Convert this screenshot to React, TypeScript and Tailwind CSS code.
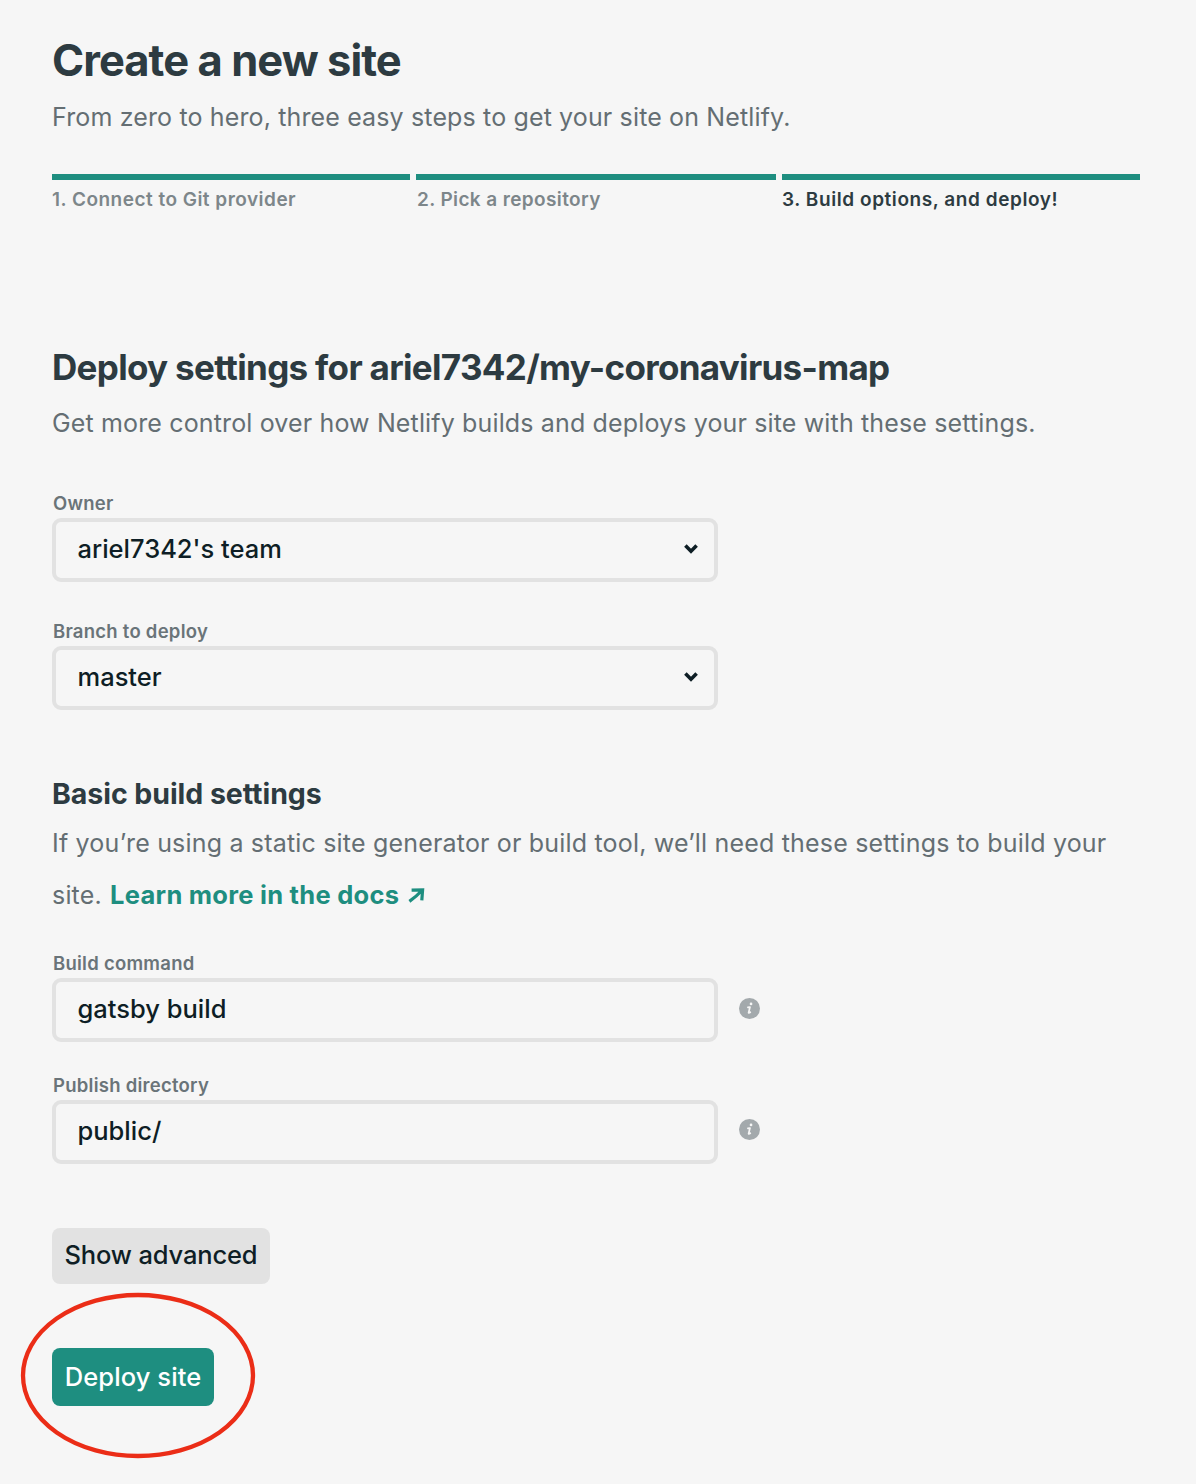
import React from "react";

const Chevron = () => (
  <svg className="mb-0.5 mr-[15px] shrink-0" width="16" height="12" viewBox="0 0 16 12" fill="none" stroke="#0e1e25" strokeWidth="3.6">
    <path d="M2.4 2.6 8 8.2l5.6-5.6" />
  </svg>
);

const Info = ({ className }: { className: string }) => (
  <svg className={`ml-[21px] shrink-0 ${className}`} width="21" height="21" viewBox="0 0 21 21">
    <circle cx="10.5" cy="10.5" r="10.5" fill="#a3a9ac" />
    <g fill="none" stroke="#f6f6f6" strokeLinecap="round" strokeLinejoin="round">
      <path d="M12 5.9h.1" strokeWidth="2.6" />
      <path d="M8.9 9.4 11 9 9.6 14.6q.4.5 1.7-.4" strokeWidth="1.7" />
    </g>
  </svg>
);

type FieldProps = { label: string; value: string; select?: boolean; className: string; infoClass?: string };

function Field({ label, value, select, className, infoClass = "mb-1" }: FieldProps) {
  return (
    <div className={className}>
      <label className="ml-px block text-[18.5px] font-semibold leading-[24px] tracking-[0.25px] text-[#6a7479]">{label}</label>
      <div className="mt-[3px] flex items-center">
        <div className="flex h-16 w-[666px] items-center justify-between rounded-[9px] border-4 border-[#e2e2e2] pl-[21.5px]">
          <span className="mb-px text-[25.5px] font-medium text-[#0e1e25]">{value}</span>
          {select && <Chevron />}
        </div>
        {!select && <Info className={infoClass} />}
      </div>
    </div>
  );
}

export default function App() {
  return (
    <main className="relative h-[1484px] w-[1196px] overflow-hidden bg-[#f6f6f6] px-[52px] pt-[33px] font-['Inter',sans-serif] text-[#2d3b41]">
      <h1 className="text-[43.5px] font-[650] leading-[54px] tracking-[-0.95px]">Create a new site</h1>
      <p className="mt-2.5 text-[25px] leading-10 tracking-[0.14px] text-[#646e73]">
        From zero to hero, three easy steps to get your site on Netlify.
      </p>
      <ol className="mt-[37px] grid w-[1088px] grid-cols-[358px_360px_358px] gap-x-1.5 whitespace-nowrap text-[19px] font-semibold leading-7 text-[#7d868a]">
        <li className="border-t-[6px] border-[#1e8e80] pt-1.5 tracking-[0.48px]">1. Connect to Git provider</li>
        <li className="border-t-[6px] border-[#1e8e80] pt-1.5 tracking-[0.38px]">
          <span className="ml-px">2. Pick a repository</span>
        </li>
        <li className="border-t-[6px] border-[#1e8e80] pt-1.5 tracking-[0.57px] text-[#2d3b41]">3. Build options, and deploy!</li>
      </ol>

      <h2 className="mt-[131px] text-[35px] font-[650] leading-[44px] tracking-[-0.68px]">
        Deploy settings for ariel7342/my-coronavirus-map
      </h2>
      <p className="mt-3.5 whitespace-nowrap text-[25px] leading-10 tracking-[0.145px] text-[#646e73]">
        Get more control over how Netlify builds and deploys your site with these settings.
      </p>
      <Field className="mt-12" label="Owner" value="ariel7342's team" select />
      <Field className="mt-[37px]" label="Branch to deploy" value="master" select />

      <h3 className="mt-16 text-[28.5px] font-[650] leading-10 tracking-[-0.05px]">Basic build settings</h3>
      <p className="mt-[3px] whitespace-nowrap text-[25px] leading-[52px] tracking-[0.185px] text-[#646e73]">
        If you’re using a static site generator or build tool, we’ll need these settings to build your
        <br />
        site.{" "}
        <a className="ml-px text-[25.5px] font-bold tracking-[0.26px] text-[#1e8e80]">
          Learn more in the docs
          <svg className="ml-[9px] inline-block align-baseline" width="17" height="16" viewBox="0 0 17 16" fill="none" stroke="#1e8e80" strokeWidth="3.2">
            <path d="M3.6 2.2 14.6 2 13.8 12.4M13.6 2.8Q9 8 1.4 13.4" />
          </svg>
        </a>
      </p>
      <Field className="mt-[30px]" label="Build command" value="gatsby build" />
      <Field className="mt-[31px]" label="Publish directory" value="public/" infoClass="mb-1.5" />

      <button className="mt-16 flex h-14 w-[218px] items-center justify-center whitespace-nowrap rounded-lg bg-[#e2e2e2] pb-0.5 text-[25.5px] font-medium tracking-[-0.15px] text-[#0e1e25]">
        Show advanced
      </button>
      <div className="relative mt-16 w-[162px]">
        <button className="flex h-[58px] w-full items-center justify-center whitespace-nowrap rounded-lg bg-[#1e8e80] pt-px text-[25.5px] font-medium tracking-[0.1px] text-white">
          Deploy site
        </button>
        <svg className="pointer-events-none absolute -left-8 -top-14" width="236" height="168" fill="none">
          <ellipse cx="118" cy="83.5" rx="115" ry="80.5" stroke="#eb2d17" strokeWidth="4.3" />
        </svg>
      </div>
    </main>
  );
}
